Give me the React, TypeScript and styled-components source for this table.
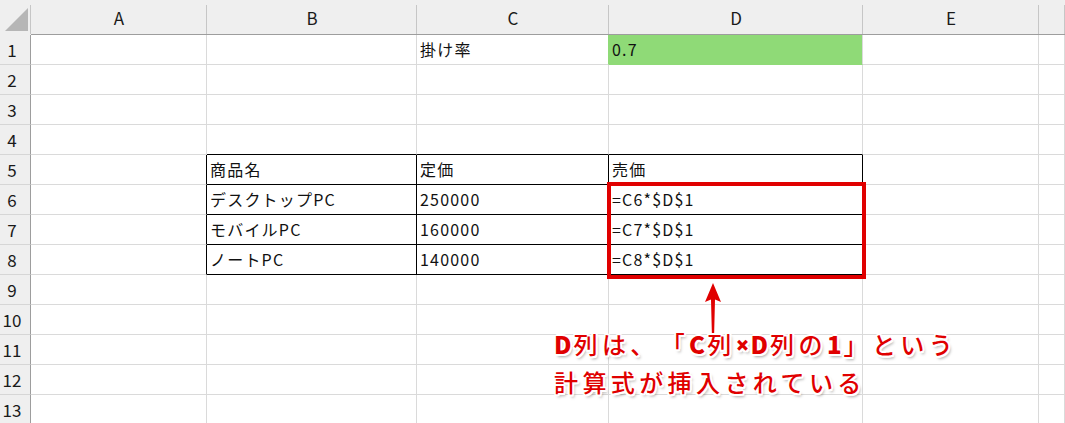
import React from "react";
import styled, { createGlobalStyle } from "styled-components";

const GlobalStyle = createGlobalStyle`
  html, body { margin: 0; padding: 0; background: #fff; overflow: hidden; }
  body { font-family: "Noto Sans CJK JP", "Noto Sans", sans-serif; }
`;

const COLS = ["A", "B", "C", "D", "E", ""];
const TEMPLATE = "31px 176px 210px 192px 254px 176px 1fr";
const GRID = "#dadada";
const HEAD_SEP = "#c6c6c6";
const HEAD_EDGE = "#9d9d9d";
const HEAD_BG = "#efefef";
const GREEN = "#8fda77";
const RED = "#e00000";

const Sheet = styled.div`
  position: relative;
  width: 1065px;
  height: 423px;
  overflow: hidden;
  background: #fff;
`;

const Row = styled.div<{ $h: number }>`
  display: grid;
  grid-template-columns: ${TEMPLATE};
  height: ${(p) => p.$h}px;
`;

const ColHead = styled.div<{ $edge?: boolean }>`
  display: flex;
  align-items: center;
  justify-content: center;
  box-sizing: border-box;
  border-bottom: 1px solid ${(p) => (p.$edge ? HEAD_BG : HEAD_EDGE)};
  background: linear-gradient(${HEAD_SEP}, ${HEAD_SEP}) right 5px / 1px calc(100% - 5px) no-repeat,
    ${HEAD_BG};
  font-size: 17px;
  color: #1a1a1a;
  line-height: 1;
`;

const Corner = styled(ColHead)`
  align-items: flex-end;
  justify-content: flex-start;
  padding: 0 0 3px 5px;
`;

const RowHead = styled.div`
  display: flex;
  align-items: center;
  justify-content: center;
  box-sizing: border-box;
  padding-right: 6px;
  background: ${HEAD_BG};
  border-right: 1px solid ${HEAD_EDGE};
  border-bottom: 1px solid #d6d6d6;
  font-size: 17px;
  color: #1a1a1a;
`;

const Cell = styled.div<{ $right: string; $bottom: string; $fill?: string }>`
  box-sizing: border-box;
  border-right: 1px solid ${(p) => p.$right};
  border-bottom: 1px solid ${(p) => p.$bottom};
  background: ${(p) => p.$fill || "#fff"};
  padding-left: 3px;
  font-size: 16px;
  letter-spacing: 1.2px;
  line-height: 29px;
  color: #111;
  white-space: nowrap;
  overflow: hidden;
`;

const Highlight = styled.div`
  position: absolute;
  left: 607px;
  top: 182px;
  width: 259px;
  height: 97px;
  box-sizing: border-box;
  border: 4px solid ${RED};
  pointer-events: none;
`;

const Arrow = styled.svg`
  position: absolute;
  left: 705px;
  top: 283px;
`;

const Callout = styled.div`
  position: absolute;
  left: 554px;
  top: 325px;
  font-size: 24px;
  line-height: 37px;
  letter-spacing: 4.4px;
  color: ${RED};
  font-weight: 500;
  white-space: nowrap;
  text-shadow: 2px 0 0 #fff, -2px 0 0 #fff, 0 2px 0 #fff, 0 -2px 0 #fff,
    1.5px 1.5px 0 #fff, -1.5px -1.5px 0 #fff, 1.5px -1.5px 0 #fff,
    -1.5px 1.5px 0 #fff, 2px 3px 3px rgba(0, 0, 0, 0.35);
`;

const Heavy = styled.span`
  font-weight: 900;
  letter-spacing: 2px;
`;

const Times = styled.span`
  font-family: "Noto Sans", sans-serif;
  font-weight: 900;
  letter-spacing: 1px;
`;

const Gap = styled.span`
  display: inline-block;
  width: 2px;
`;

type CellData = { text?: string; fill?: string };

const data: Record<string, CellData> = {
  C1: { text: "掛け率" },
  D1: { text: "0.7", fill: GREEN },
  B5: { text: "商品名" },
  C5: { text: "定価" },
  D5: { text: "売価" },
  B6: { text: "デスクトップPC" },
  C6: { text: "250000" },
  D6: { text: "=C6*$D$1" },
  B7: { text: "モバイルPC" },
  C7: { text: "160000" },
  D7: { text: "=C7*$D$1" },
  B8: { text: "ノートPC" },
  C8: { text: "140000" },
  D8: { text: "=C8*$D$1" },
};

const inTable = (c: string, r: number) => ["B", "C", "D"].includes(c) && r >= 5 && r <= 8;

function borders(c: string, r: number) {
  let right = GRID;
  let bottom = GRID;
  if (inTable(c, r)) {
    right = "#000";
    bottom = "#000";
  }
  if (c === "A" && r >= 5 && r <= 8) right = "#000";
  if (r === 4 && ["B", "C", "D"].includes(c)) bottom = "#000";
  if (c === "D" && r === 1) bottom = GREEN;
  if (c === "C" && r === 1) right = GREEN;
  return { right, bottom };
}

const rows = Array.from({ length: 13 }, (_, i) => i + 1);

export default function App() {
  return (
    <>
      <GlobalStyle />
      <Sheet>
        <Row $h={35}>
          <Corner $edge>
            <svg width="23" height="23" viewBox="0 0 23 23">
              <polygon points="0,23 23,23 23,0" fill="#b6b6b6" />
            </svg>
          </Corner>
          {COLS.map((c, i) => (
            <ColHead key={i}>{c}</ColHead>
          ))}
        </Row>
        {rows.map((r) => (
          <Row key={r} $h={30}>
            <RowHead>{r}</RowHead>
            {COLS.map((c, i) => {
              const key = `${c}${r}`;
              const d = c ? data[key] : undefined;
              const b = borders(c, r);
              return (
                <Cell key={i} $right={b.right} $bottom={b.bottom} $fill={d?.fill}>
                  {d?.text}
                </Cell>
              );
            })}
          </Row>
        ))}
        <Highlight />
        <Arrow width="16" height="56" viewBox="0 0 16 56">
          <path d="M8 0 L16 19 L10 16.5 L9 56 L7 56 L6 16.5 L0 19 Z" fill={RED} />
        </Arrow>
        <Callout>
          <div>
            <Heavy>D</Heavy>列は、<Gap />「<Heavy>C</Heavy>列<Times>×</Times><Heavy>D</Heavy>列の<Heavy>1</Heavy>」という
          </div>
          <div>計算式が挿入されている</div>
        </Callout>
      </Sheet>
    </>
  );
}
